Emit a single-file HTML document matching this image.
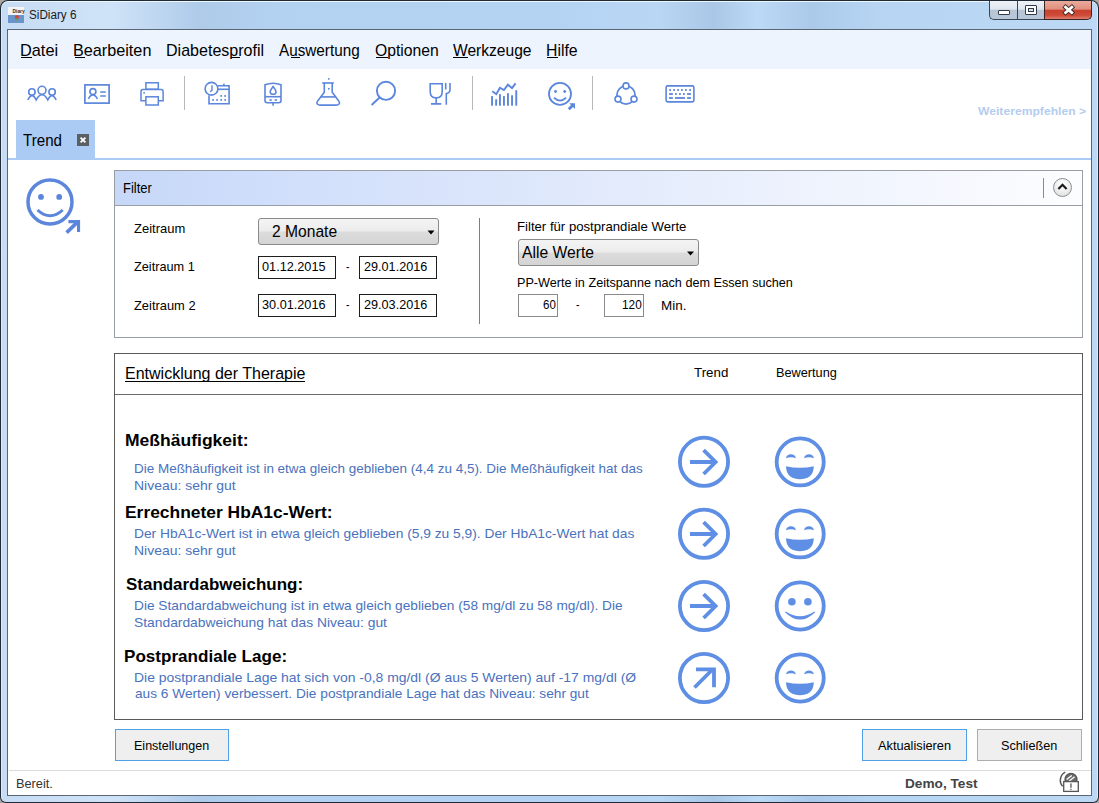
<!DOCTYPE html>
<html><head><meta charset="utf-8">
<style>
html,body{margin:0;padding:0;width:1099px;height:803px;overflow:hidden;background:#a9a7a3}
.t{position:absolute;font-family:"Liberation Sans",sans-serif;white-space:pre;transform-origin:0 0}
.a{position:absolute;box-sizing:border-box}
svg{position:absolute;left:0;top:0}
</style></head><body>
<!-- outer frame -->
<div class="a" style="left:0;top:0;width:1099px;height:803px;background:#1f2a36;border-radius:8px 8px 6px 6px"></div>
<div class="a" style="left:1px;top:1px;width:1097px;height:801px;border-radius:7px 7px 5px 5px;background:linear-gradient(90deg,#c6dcf4 0%,#cfe3f8 10%,#afcbea 18%,#b3d1f1 25%,#b4d3f3 50%,#b9d6f4 60%,#aac7e7 65%,#bcd9f6 69%,#abc9e9 74%,#b7d5f3 80%,#bcd8f4 100%);border-top:1px solid #eef7fe;border-left:1px solid #dcebf9;border-right:1px solid #dcebf9"></div>
<!-- client inner border -->
<div class="a" style="left:7px;top:29px;width:1085px;height:767px;background:#5a6673"></div>
<div class="a" style="left:8px;top:30px;width:1083px;height:765px;background:#ffffff"></div>
<!-- menu bar -->
<div class="a" style="left:8px;top:30px;width:1083px;height:39px;background:#edf4fd"></div>
<!-- title icon -->
<div class="a" style="left:8px;top:7px;width:16px;height:8px;background:#f4f4f4"></div>
<div class="a" style="left:8px;top:15px;width:16px;height:8px;background:#6a95cc"></div>
<!-- tab -->
<div class="a" style="left:16px;top:120px;width:79px;height:39px;background:#abcbf5"></div>
<div class="a" style="left:8px;top:158px;width:1083px;height:2px;background:#abcbf5"></div>
<div class="a" style="left:77px;top:134px;width:12px;height:12px;background:#5b5e63"></div>
<!-- filter box -->
<div class="a" style="left:114px;top:170px;width:969px;height:168px;border:1px solid #999ea5"></div>
<div class="a" style="left:115px;top:171px;width:967px;height:35px;background:linear-gradient(90deg,#c6d7f8 0%,#d2e0fb 20%,#dce6fb 40%,#edf2fd 70%,#fcfdff 100%);border-bottom:1px solid #999ea5"></div>
<div class="a" style="left:1043px;top:178px;width:1px;height:20px;background:#8a8a8a"></div>
<div class="a" style="left:1053px;top:178px;width:19px;height:19px;border-radius:50%;border:1px solid #8f8f8f;background:radial-gradient(circle at 50% 30%,#ffffff 0%,#f1f1f1 45%,#d8d8d8 100%)"></div>
<div class="a" style="left:479px;top:218px;width:1px;height:106px;background:#7d7d7d"></div>
<!-- combos -->
<div class="a" style="left:258px;top:218px;width:181px;height:27px;border:1px solid #8a8a8a;border-radius:3px;background:linear-gradient(180deg,#f4f4f4 0%,#ececec 48%,#dcdcdc 52%,#d4d4d4 100%)"></div>
<div class="a" style="left:518px;top:239px;width:181px;height:27px;border:1px solid #8a8a8a;border-radius:3px;background:linear-gradient(180deg,#f4f4f4 0%,#ececec 48%,#dcdcdc 52%,#d4d4d4 100%)"></div>
<!-- date fields -->
<div class="a" style="left:258px;top:256px;width:78px;height:23px;border:1px solid #1e1e1e"></div>
<div class="a" style="left:359px;top:256px;width:78px;height:23px;border:1px solid #1e1e1e"></div>
<div class="a" style="left:258px;top:294px;width:78px;height:23px;border:1px solid #1e1e1e"></div>
<div class="a" style="left:359px;top:294px;width:78px;height:23px;border:1px solid #1e1e1e"></div>
<div class="a" style="left:518px;top:294px;width:40px;height:23px;border:1px solid #8a8a8a"></div>
<div class="a" style="left:604px;top:294px;width:40px;height:23px;border:1px solid #8a8a8a"></div>
<!-- therapy box -->
<div class="a" style="left:114px;top:353px;width:969px;height:367px;border:1px solid #5a5a5a"></div>
<div class="a" style="left:115px;top:394px;width:967px;height:1px;background:#6a6a6a"></div>
<div class="a" style="left:125px;top:381px;width:180px;height:1px;background:#000"></div>
<!-- buttons -->
<div class="a" style="left:115px;top:729px;width:114px;height:32px;border:1px solid #4fa0e8;background:#efefef"></div>
<div class="a" style="left:862px;top:729px;width:105px;height:32px;border:1px solid #4fa0e8;background:#efefef"></div>
<div class="a" style="left:977px;top:729px;width:105px;height:32px;border:1px solid #adadad;background:#efefef"></div>
<!-- status -->
<div class="a" style="left:9px;top:770px;width:1082px;height:1px;background:#dcdcdc"></div>
<!-- menu underlines -->
<div class="a" style="left:21px;top:57px;width:11px;height:1px;background:#000"></div>
<div class="a" style="left:75px;top:57px;width:10px;height:1px;background:#000"></div>
<div class="a" style="left:231px;top:57px;width:9px;height:1px;background:#000"></div>
<div class="a" style="left:291px;top:57px;width:9px;height:1px;background:#000"></div>
<div class="a" style="left:376px;top:57px;width:12px;height:1px;background:#000"></div>
<div class="a" style="left:453px;top:57px;width:15px;height:1px;background:#000"></div>
<div class="a" style="left:547px;top:57px;width:11px;height:1px;background:#000"></div>
<!-- separators toolbar -->
<div class="a" style="left:184px;top:76px;width:1px;height:34px;background:#b8b8b8"></div>
<div class="a" style="left:472px;top:76px;width:1px;height:34px;background:#b8b8b8"></div>
<div class="a" style="left:592px;top:76px;width:1px;height:34px;background:#b8b8b8"></div>
<!-- window buttons -->
<div class="a" style="left:989px;top:1px;width:29px;height:19px;border:1px solid #3b4654;border-top:none;border-right:none;border-radius:0 0 0 5px;background:linear-gradient(180deg,#eef3f8 0%,#dfe6ee 45%,#b7c5d5 52%,#b9c8d8 100%)"></div>
<div class="a" style="left:1017px;top:1px;width:28px;height:19px;border:1px solid #3b4654;border-top:none;border-right:none;background:linear-gradient(180deg,#eef3f8 0%,#dfe6ee 45%,#b7c5d5 52%,#b9c8d8 100%)"></div>
<div class="a" style="left:1044px;top:1px;width:48px;height:19px;border:1px solid #3a2320;border-top:none;border-radius:0 0 5px 0;background:linear-gradient(180deg,#e9aa9c 0%,#e1907e 45%,#c9412f 52%,#cf4c38 80%,#e08070 100%)"></div>
<div class="a" style="left:998px;top:10px;width:12px;height:5px;border:1px solid #2f3a46;border-radius:1px;background:#fff"></div>
<div class="a" style="left:1025px;top:5px;width:12px;height:10px;border:1px solid #2f3a46;border-radius:1px;background:#fff"></div>
<div class="a" style="left:1028px;top:8px;width:6px;height:4px;border:1px solid #2f3a46;background:#d9e0e8"></div>
<div class="t" style="left:28.67px;top:8.68px;font-size:12.61px;line-height:12.61px;color:#1a1a1a;transform:scaleX(0.9280)">SiDiary 6</div>
<div class="t" style="left:20.46px;top:42.02px;font-size:17.39px;line-height:17.39px;color:#000;transform:scaleX(0.9385)">Datei</div>
<div class="t" style="left:73.07px;top:42.02px;font-size:17.39px;line-height:17.39px;color:#000;transform:scaleX(0.9329)">Bearbeiten</div>
<div class="t" style="left:166.08px;top:42.02px;font-size:17.39px;line-height:17.39px;color:#000;transform:scaleX(0.9238)">Diabetesprofil</div>
<div class="t" style="left:279.00px;top:42.02px;font-size:17.39px;line-height:17.39px;color:#000;transform:scaleX(0.8791)">Auswertung</div>
<div class="t" style="left:374.70px;top:42.02px;font-size:17.39px;line-height:17.39px;color:#000;transform:scaleX(0.9043)">Optionen</div>
<div class="t" style="left:453.00px;top:42.02px;font-size:17.39px;line-height:17.39px;color:#000;transform:scaleX(0.8966)">Werkzeuge</div>
<div class="t" style="left:546.09px;top:42.02px;font-size:17.39px;line-height:17.39px;color:#000;transform:scaleX(0.9091)">Hilfe</div>
<div class="t" style="left:977.70px;top:106.47px;font-size:11.45px;line-height:11.45px;font-weight:bold;color:#b4cdee;transform:scaleX(1.0618)">Weiterempfehlen &gt;</div>
<div class="t" style="left:23.10px;top:131.92px;font-size:17.39px;line-height:17.39px;color:#000;transform:scaleX(0.8705)">Trend</div>
<div class="t" style="left:123.45px;top:182.00px;font-size:13.77px;line-height:13.77px;color:#000;transform:scaleX(0.9467)">Filter</div>
<div class="t" style="left:133.90px;top:223.13px;font-size:12.32px;line-height:12.32px;color:#000;transform:scaleX(1.0542)">Zeitraum</div>
<div class="t" style="left:133.90px;top:261.23px;font-size:12.32px;line-height:12.32px;color:#000;transform:scaleX(1.0339)">Zeitraum 1</div>
<div class="t" style="left:133.90px;top:299.63px;font-size:12.32px;line-height:12.32px;color:#000;transform:scaleX(1.0458)">Zeitraum 2</div>
<div class="t" style="left:271.75px;top:224.46px;font-size:16.52px;line-height:16.52px;color:#000;transform:scaleX(0.9456)">2 Monate</div>
<div class="t" style="left:262.40px;top:262.40px;font-size:11.88px;line-height:11.88px;color:#000;transform:scaleX(1.0695)">01.12.2015</div>
<div class="t" style="left:363.70px;top:262.40px;font-size:11.88px;line-height:11.88px;color:#000;transform:scaleX(1.0644)">29.01.2016</div>
<div class="t" style="left:262.40px;top:300.30px;font-size:11.88px;line-height:11.88px;color:#000;transform:scaleX(1.0695)">30.01.2016</div>
<div class="t" style="left:363.70px;top:300.30px;font-size:11.88px;line-height:11.88px;color:#000;transform:scaleX(1.0644)">29.03.2016</div>
<div class="t" style="left:345.50px;top:262.40px;font-size:11.88px;line-height:11.88px;color:#000;transform:scaleX(0.8750)">-</div>
<div class="t" style="left:345.50px;top:300.30px;font-size:11.88px;line-height:11.88px;color:#000;transform:scaleX(0.8750)">-</div>
<div class="t" style="left:517.43px;top:221.43px;font-size:12.32px;line-height:12.32px;color:#000;transform:scaleX(1.0682)">Filter für postprandiale Werte</div>
<div class="t" style="left:522.40px;top:245.16px;font-size:16.52px;line-height:16.52px;color:#000;transform:scaleX(0.9487)">Alle Werte</div>
<div class="t" style="left:517.47px;top:276.63px;font-size:12.32px;line-height:12.32px;color:#000;transform:scaleX(1.0266)">PP-Werte in Zeitspanne nach dem Essen suchen</div>
<div class="t" style="left:543.00px;top:300.20px;font-size:11.88px;line-height:11.88px;color:#000;transform:scaleX(0.9692)">60</div>
<div class="t" style="left:621.51px;top:300.20px;font-size:11.88px;line-height:11.88px;color:#000;transform:scaleX(0.9947)">120</div>
<div class="t" style="left:576.00px;top:300.20px;font-size:11.88px;line-height:11.88px;color:#000;transform:scaleX(0.8750)">-</div>
<div class="t" style="left:661.11px;top:299.83px;font-size:12.32px;line-height:12.32px;color:#000;transform:scaleX(1.0905)">Min.</div>
<div class="t" style="left:124.83px;top:366.46px;font-size:16.52px;line-height:16.52px;color:#000;transform:scaleX(0.9697)">Entwicklung der Therapie</div>
<div class="t" style="left:694.20px;top:366.68px;font-size:12.61px;line-height:12.61px;color:#000;transform:scaleX(1.0562)">Trend</div>
<div class="t" style="left:775.69px;top:366.68px;font-size:12.61px;line-height:12.61px;color:#000;transform:scaleX(1.0085)">Bewertung</div>
<div class="t" style="left:125.02px;top:432.40px;font-size:16.23px;line-height:16.23px;font-weight:bold;color:#000;transform:scaleX(1.0804)">Meßhäufigkeit:</div>
<div class="t" style="left:133.91px;top:461.92px;font-size:13.62px;line-height:13.62px;color:#4a72bd;transform:scaleX(0.9889)">Die Meßhäufigkeit ist in etwa gleich geblieben (4,4 zu 4,5). Die Meßhäufigkeit hat das</div>
<div class="t" style="left:133.87px;top:478.72px;font-size:13.62px;line-height:13.62px;color:#4a72bd;transform:scaleX(1.0255)">Niveau: sehr gut</div>
<div class="t" style="left:124.73px;top:504.40px;font-size:16.23px;line-height:16.23px;font-weight:bold;color:#000;transform:scaleX(1.0733)">Errechneter HbA1c-Wert:</div>
<div class="t" style="left:133.89px;top:526.92px;font-size:13.62px;line-height:13.62px;color:#4a72bd;transform:scaleX(1.0124)">Der HbA1c-Wert ist in etwa gleich geblieben (5,9 zu 5,9). Der HbA1c-Wert hat das</div>
<div class="t" style="left:133.87px;top:543.52px;font-size:13.62px;line-height:13.62px;color:#4a72bd;transform:scaleX(1.0255)">Niveau: sehr gut</div>
<div class="t" style="left:125.50px;top:576.00px;font-size:16.23px;line-height:16.23px;font-weight:bold;color:#000;transform:scaleX(1.0452)">Standardabweichung:</div>
<div class="t" style="left:133.59px;top:598.82px;font-size:13.62px;line-height:13.62px;color:#4a72bd;transform:scaleX(1.0060)">Die Standardabweichung ist in etwa gleich geblieben (58 mg/dl zu 58 mg/dl). Die</div>
<div class="t" style="left:133.58px;top:615.52px;font-size:13.62px;line-height:13.62px;color:#4a72bd;transform:scaleX(1.0161)">Standardabweichung hat das Niveau: gut</div>
<div class="t" style="left:124.45px;top:647.90px;font-size:16.23px;line-height:16.23px;font-weight:bold;color:#000;transform:scaleX(1.0523)">Postprandiale Lage:</div>
<div class="t" style="left:133.58px;top:671.02px;font-size:13.62px;line-height:13.62px;color:#4a72bd;transform:scaleX(1.0233)">Die postprandiale Lage hat sich von -0,8 mg/dl (Ø aus 5 Werten) auf -17 mg/dl (Ø</div>
<div class="t" style="left:134.60px;top:687.42px;font-size:13.62px;line-height:13.62px;color:#4a72bd;transform:scaleX(1.0053)">aus 6 Werten) verbessert. Die postprandiale Lage hat das Niveau: sehr gut</div>
<div class="t" style="left:133.52px;top:739.76px;font-size:12.75px;line-height:12.75px;color:#000;transform:scaleX(0.9827)">Einstellungen</div>
<div class="t" style="left:878.00px;top:739.76px;font-size:12.75px;line-height:12.75px;color:#000;transform:scaleX(1.0000)">Aktualisieren</div>
<div class="t" style="left:1001.41px;top:739.76px;font-size:12.75px;line-height:12.75px;color:#000;transform:scaleX(0.9927)">Schließen</div>
<div class="t" style="left:15.64px;top:777.37px;font-size:13.33px;line-height:13.33px;color:#333;transform:scaleX(0.9568)">Bereit.</div>
<div class="t" style="left:904.93px;top:777.66px;font-size:12.75px;line-height:12.75px;font-weight:bold;color:#444;transform:scaleX(1.0701)">Demo, Test</div>
<svg width="1099" height="803" viewBox="0 0 1099 803">
<g fill="none" stroke="#5b86dc" stroke-width="1.6" stroke-linecap="butt" stroke-linejoin="miter">
 <!-- people -->
 <circle cx="31.9" cy="92" r="3.2"/>
 <circle cx="42" cy="90.3" r="4"/>
 <circle cx="52.1" cy="92" r="3.2"/>
 <path d="M27.8 100 Q30 95.6 32 95.6 Q34.2 95.6 36.2 100 Q38.8 94.8 42 94.8 Q45.2 94.8 47.8 100 Q49.8 95.6 52 95.6 Q54 95.6 56.2 100"/>
 <!-- card -->
 <rect x="84.9" y="84.9" width="24.2" height="18.2" stroke-width="1.7"/>
 <circle cx="92.9" cy="91.6" r="3"/>
 <path d="M88.4 99 Q90.2 95 92.9 95 Q95.6 95 97.4 99"/>
 <path d="M100.2 92 H105.8 M100.2 95.9 H105.8" stroke-width="1.5"/>
 <!-- printer -->
 <rect x="145.9" y="82.8" width="12.4" height="6.4" stroke-width="1.5"/>
 <path d="M145.9 100.8 H141 V91.4 Q141 89.5 142.9 89.5 H161.2 Q163.1 89.5 163.1 91.4 V100.8 H158.3" stroke-width="1.5"/>
 <rect x="145.9" y="96.8" width="12.4" height="8.2" stroke-width="1.5"/>
 <!-- clock calendar -->
 <circle cx="211.5" cy="88.75" r="6.4"/>
 <path d="M212 85.2 V90.1 L210.2 91.8" stroke-width="1.4"/>
 <path d="M217.9 85.8 H229.1 V103.7 H209 V95.3" stroke-width="1.6"/>
 <path d="M218 89.3 H229" stroke-width="1.6"/>
 <!-- meter -->
 <path d="M265 84.8 Q273 81.6 281 84.8 V100.5 Q281 102.7 278.8 102.7 H267.2 Q265 102.7 265 100.5 Z" stroke-width="1.6"/>
 <path d="M265 96.7 H281" stroke-width="1.6"/>
 <path d="M273.1 86.6 Q270.2 90.5 270.2 92 Q270.2 94.3 273.1 94.3 Q276 94.3 276 92 Q276 90.5 273.1 86.6 Z" stroke-width="1.6"/>
 <!-- flask -->
 <path d="M322.2 83 H333.8" stroke-width="1.6"/>
 <path d="M324.3 83 V92.2 L317.5 101.3 Q316.3 103 317.5 104.2 Q318.4 105.1 320 105.1 H336.4 Q338 105.1 338.9 104.2 Q340.1 103 338.9 101.3 L332.2 92.2 V83" stroke-width="1.6"/>
 <path d="M320.7 96.9 H335.7" stroke-width="1.6"/>
 <!-- magnifier -->
 <circle cx="386" cy="90.8" r="9.1" stroke-width="1.9"/>
 <path d="M379.4 97.8 L371.6 105" stroke-width="1.9"/>
 <!-- glass fork -->
 <path d="M430.2 83.7 H442.2 V91.5 Q442.2 97.9 436.2 97.9 Q430.2 97.9 430.2 91.5 Z" stroke-width="1.6"/>
 <path d="M436.2 97.9 V103.9 M431 103.9 H441.2" stroke-width="1.6"/>
 <path d="M445.7 83 V89.6 M450 83 V89.6 Q450 93.2 446.3 93.6 V104.8" stroke-width="1.6"/>
 <!-- chart -->
 <path d="M492.3 91.3 L496.3 94.2 L499.9 87.7 L503.9 90 L507.9 84.7 L512 88.1 L515.6 83.4" stroke-width="1.9"/>
 <!-- smiley toolbar -->
 <circle cx="560" cy="93.9" r="11" stroke-width="1.8"/>
 <path d="M554 97.6 Q560 103.6 566.1 97.6" stroke-width="1.8"/>
 <!-- share -->
 <circle cx="626" cy="95" r="9.1" stroke-width="1.7"/>
 <circle cx="626" cy="85.9" r="3" stroke-width="1.6" fill="#fff"/>
 <circle cx="618" cy="99.1" r="3" stroke-width="1.6" fill="#fff"/>
 <circle cx="634" cy="99.1" r="3" stroke-width="1.6" fill="#fff"/>
 <!-- keyboard -->
 <rect x="666.1" y="85.9" width="27.8" height="16" rx="1.6" stroke-width="1.6"/>
 <!-- big smiley left -->
 <circle cx="50" cy="201.9" r="22" stroke-width="3.5"/>
 <path d="M37.5 210 Q50 221.5 62.7 210" stroke-width="3"/>
 <path d="M66.6 232.6 L78.2 221.4" stroke-width="3.6"/>
</g>
<g fill="#5b86dc">
 <!-- clock dots -->
 <rect x="220.3" y="95.1" width="1.7" height="1.7"/><rect x="224.3" y="95.1" width="1.7" height="1.7"/>
 <rect x="212.2" y="99.1" width="1.7" height="1.7"/><rect x="216.2" y="99.1" width="1.7" height="1.7"/><rect x="220.3" y="99.1" width="1.7" height="1.7"/><rect x="224.3" y="99.1" width="1.7" height="1.7"/>
 <rect x="223.1" y="83.6" width="1.6" height="2.5"/>
 <!-- meter keys -->
 <rect x="269.4" y="99.2" width="2.4" height="1.6"/><rect x="274.6" y="99.2" width="2.4" height="1.6"/>
 <rect x="272.3" y="102.7" width="1.6" height="3"/>
 <!-- flask dots -->
 <rect x="328" y="78.1" width="1.6" height="1.6"/><rect x="328" y="88" width="1.6" height="1.6"/>
 <!-- printer dot -->
 <rect x="143.3" y="92.1" width="1.6" height="1.6"/>
 <!-- chart bars -->
 <rect x="491.1" y="96.1" width="1.9" height="9.6"/>
 <rect x="495.2" y="99.3" width="1.9" height="6.4"/>
 <rect x="499" y="94.2" width="1.9" height="11.5"/>
 <rect x="503" y="96.1" width="1.9" height="9.6"/>
 <rect x="507" y="93.2" width="1.9" height="12.5"/>
 <rect x="511.1" y="95.3" width="1.9" height="10.4"/>
 <rect x="515.3" y="90.2" width="1.9" height="15.5"/>
 <!-- smiley toolbar eyes + arrow -->
 <circle cx="555.5" cy="91.5" r="1.4"/><circle cx="564.7" cy="91.5" r="1.4"/>
 <path d="M569.2 103.3 H575 V109 L573 107 L569.8 110.2 L567.8 108.2 L571 105 Z"/>
 <!-- keyboard keys -->
 <rect x="669.2" y="89.1" width="1.8" height="1.8"/><rect x="673.2" y="89.1" width="1.8" height="1.8"/><rect x="677.2" y="89.1" width="1.8" height="1.8"/><rect x="681" y="89.1" width="1.8" height="1.8"/><rect x="685" y="89.1" width="1.8" height="1.8"/><rect x="689.2" y="89.1" width="1.8" height="1.8"/>
 <rect x="669.1" y="93.1" width="3.8" height="1.8"/><rect x="675" y="93.1" width="1.8" height="1.8"/><rect x="679" y="93.1" width="1.8" height="1.8"/><rect x="683" y="93.1" width="1.8" height="1.8"/><rect x="687.1" y="93.1" width="3.8" height="1.8"/>
 <rect x="669.1" y="97.1" width="3.8" height="1.8"/><rect x="675" y="97.1" width="10" height="1.8"/><rect x="687.1" y="97.1" width="3.8" height="1.8"/>
 <!-- card bottom bumps -->
 <!-- big smiley eyes and arrow -->
 <circle cx="41" cy="196.9" r="2.9"/><circle cx="59.2" cy="196.9" r="2.9"/>
 <path d="M68.4 220.1 H80.1 V231.9 H77 V223.2 H68.4 Z"/>
</g>
<!-- trend icons -->
<g fill="none" stroke="#5e8fe4" stroke-width="3.8">
 <circle cx="704" cy="461.8" r="24.1"/>
 <circle cx="800.2" cy="461.9" r="23.55"/>
 <circle cx="704" cy="533.8" r="24.1"/>
 <circle cx="800.2" cy="533.9" r="23.55"/>
 <circle cx="704" cy="606" r="24.1"/>
 <circle cx="800.2" cy="606" r="23.55"/>
 <circle cx="704" cy="678" r="24.1"/>
 <circle cx="800.2" cy="678" r="23.55"/>
 <!-- arrows right -->
 <path d="M690 462 H716 M703.6 450.2 L715.6 462 L703.6 474"/>
 <path d="M690 534 H716 M703.6 522.2 L715.6 534 L703.6 546"/>
 <path d="M690 606 H716 M703.6 594.2 L715.6 606 L703.6 618"/>
 <!-- arrow up-right -->
 <path d="M694.5 687.5 L712.5 669.5 M696 669.3 H714 V687.3"/>
 <!-- smile -->
 
</g>
<g fill="#5e8fe4">
 <!-- laughing eyes row1 -->
 <path d="M786 458.2 C786.5 453.0 795.4 453.0 795.9 458.2 Q791.0 456.3 786 458.2 Z"/>
 <path d="M804.1 458.2 C804.6 453.0 813.4 453.0 813.9 458.2 Q809.0 456.3 804.1 458.2 Z"/>
 <path d="M786 466.2 Q800 469.2 813.8 466.2 C813.8 476.0 807 479.2 800 479.2 C793 479.2 786 476.0 786 466.2 Z"/>
 <path d="M786 530.2 C786.5 525.0 795.4 525.0 795.9 530.2 Q791.0 528.3 786 530.2 Z"/>
 <path d="M804.1 530.2 C804.6 525.0 813.4 525.0 813.9 530.2 Q809.0 528.3 804.1 530.2 Z"/>
 <path d="M786 538.2 Q800 541.2 813.8 538.2 C813.8 548.0 807 551.2 800 551.2 C793 551.2 786 548.0 786 538.2 Z"/>
 <path d="M786 674.3 C786.5 669.1 795.4 669.1 795.9 674.3 Q791.0 672.4 786 674.3 Z"/>
 <path d="M804.1 674.3 C804.6 669.1 813.4 669.1 813.9 674.3 Q809.0 672.4 804.1 674.3 Z"/>
 <path d="M786 682.3 Q800 685.3 813.8 682.3 C813.8 692.1 807 695.3 800 695.3 C793 695.3 786 692.1 786 682.3 Z"/>
 <circle cx="791.9" cy="601.8" r="3.8"/><path d="M785 612.2 L785.8 611.6 Q800 621 814.4 611.6 L815.2 612.2 Q800 627 785 612.2 Z"/><circle cx="807.9" cy="601.8" r="3.8"/>
</g>
<!-- filter collapse chevron -->
<path d="M1058.4 189 L1062.5 184.8 L1066.6 189" fill="none" stroke="#1a1a1a" stroke-width="2.2"/>
<!-- combo arrows -->
<path d="M427.5 230.5 H434.5 L431 234.5 Z" fill="#000"/>
<path d="M687 251.5 H694 L690.5 255.5 Z" fill="#000"/>
<!-- tab close x -->
<path d="M80.6 137.6 L85.4 142.4 M85.4 137.6 L80.6 142.4" stroke="#fff" stroke-width="1.8"/>
<!-- close X -->
<path d="M1065.6 7.2 L1071.8 12.6 M1071.8 7.2 L1065.6 12.6" stroke="#3a2a28" stroke-width="4.6" stroke-linecap="square"/>
<path d="M1065.6 7.2 L1071.8 12.6 M1071.8 7.2 L1065.6 12.6" stroke="#ffffff" stroke-width="2.8" stroke-linecap="square"/>
<!-- title icon details -->
<text x="12.6" y="13" font-family="Liberation Sans" font-weight="bold" font-size="4.8" fill="#2a2a2a">Diary</text>
<circle cx="16.9" cy="17.2" r="2" fill="#d8402f"/>
<circle cx="16.6" cy="19.4" r="1.4" fill="#6aa04a"/>
<!-- status icon -->
<g fill="none" stroke="#555" stroke-width="1.3">
 <path d="M1065.3 772.2 A9 9 0 0 0 1062.6 786.2" stroke-width="1.5"/>
 <circle cx="1071" cy="779.4" r="6" fill="#6a6a6a"/>
 <path d="M1066.6 779.6 L1071.8 775.4 M1067.8 782.2 L1074.6 776.8" stroke="#fff" stroke-width="1.3"/>
 <rect x="1063.7" y="781.6" width="14.6" height="9.8" fill="#fff"/>
</g>
<rect x="1070.3" y="783.4" width="1.3" height="4.4" fill="#555"/>
<rect x="1070.3" y="788.8" width="1.3" height="1.1" fill="#555"/>
</svg>

</body></html>
